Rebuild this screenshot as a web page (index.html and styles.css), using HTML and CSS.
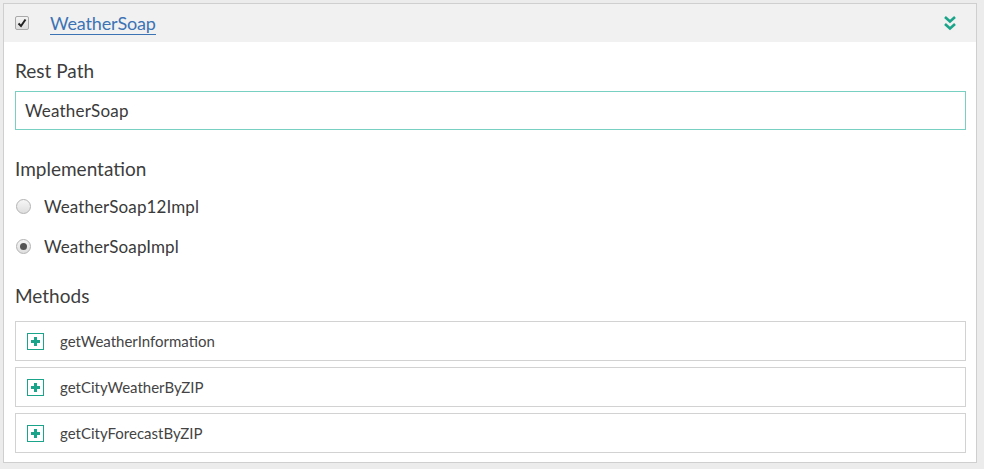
FILE: index.html
```html
<!DOCTYPE html>
<html>
<head>
<meta charset="utf-8">
<link rel="stylesheet" href="styles.css">
</head>
<body>
<div class="panel">
  <div class="panel-head">
    <span class="check"><svg width="10" height="10" viewBox="0 0 10 10"><path d="M1.5 5.5 L4 8 L8.5 1.5" fill="none" stroke="#222" stroke-width="2"/></svg></span>
    <a class="title">WeatherSoap</a>
    <svg class="chev" width="14" height="16" viewBox="0 0 14 16"><path d="M2 2 L7 6.5 L12 2 M2 9 L7 13.5 L12 9" fill="none" stroke="#1aa58a" stroke-width="2.6"/></svg>
  </div>
  <div class="panel-body">
    <div class="label">Rest Path</div>
    <div class="input">WeatherSoap</div>
    <div class="label impl">Implementation</div>
    <div class="radio-row"><span class="radio"></span><span>WeatherSoap12Impl</span></div>
    <div class="radio-row"><span class="radio on"></span><span>WeatherSoapImpl</span></div>
    <div class="label methods">Methods</div>
    <div class="method"><span class="plus"></span><span>getWeatherInformation</span></div>
    <div class="method"><span class="plus"></span><span>getCityWeatherByZIP</span></div>
    <div class="method"><span class="plus"></span><span>getCityForecastByZIP</span></div>
  </div>
</div>
</body>
</html>
```
FILE: styles.css
```css
html, body { margin: 0; padding: 0; }
body {
  background: #ececec;
  font-family: Lato, "Open Sans", sans-serif;
  color: #333;
  width: 984px;
  height: 469px;
  overflow: hidden;
}
.panel {
  margin: 3px 0 0 3px;
  width: 974px;
  height: 460px;
  border: 1px solid #cfcfcf;
  background: #fff;
  box-sizing: border-box;
}
.panel-head {
  height: 38px;
  background: #f1f1f1;
  display: flex;
  align-items: center;
  padding-left: 11px;
  padding-right: 19px;
}
.check {
  width: 12px; height: 12px;
  border: 1px solid #a9a9a9;
  border-radius: 2px;
  background: linear-gradient(#f4f4f4, #dcdcdc);
  display: flex; align-items: center; justify-content: center;
}
.title {
  margin-left: 21px;
  font-size: 18px;
  letter-spacing: -0.15px;
  color: #3c73b5;
  border-bottom: 1px solid #3c73b5;
  line-height: 21px;
  padding-top: 1px;
}
.chev { margin-left: auto; }
.panel-body { padding: 17px 10px 0 11px; }
.label { font-size: 19px; line-height: 24px; color: #3d3d3d; }
.input {
  margin-top: 8px;
  height: 39px;
  border: 1px solid #78d0c2;
  box-sizing: border-box;
  padding-left: 9px;
  font-size: 17px;
  letter-spacing: 0.2px;
  line-height: 37px;
  color: #3a3a3a;
}
.impl { margin-top: 27px; }
.radio-row {
  display: flex; align-items: center;
  font-size: 17px; color: #3a3a3a;
  height: 24px;
  letter-spacing: 0.1px;
}
.impl + .radio-row { margin-top: 13px; }
.radio-row + .radio-row { margin-top: 16px; }
.radio {
  width: 13px; height: 13px;
  border: 1px solid #b3b3b3;
  border-radius: 50%;
  background: linear-gradient(#f6f6f6, #dedede);
  margin-left: 1px;
  margin-right: 13px;
  position: relative;
}
.radio.on::after {
  content: "";
  position: absolute;
  left: 3px; top: 3px;
  width: 7px; height: 7px;
  border-radius: 50%;
  background: #555;
}
.methods { margin-top: 26px; }
.method {
  margin-top: 6px;
  height: 40px;
  border: 1px solid #d2d2d2;
  box-sizing: border-box;
  display: flex; align-items: center;
  font-size: 15px; color: #444;
}
.methods + .method { margin-top: 13px; }
.plus {
  border: 1px solid #1aa58a;
  margin-left: 11px; margin-right: 16px;
  position: relative;
  box-sizing: border-box;
  width: 17px; height: 17px;
}
.plus::before, .plus::after {
  content: ""; position: absolute; background: #1aa58a;
}
.plus::before { left: 3px; right: 3px; top: 6px; height: 3px; }
.plus::after { top: 3px; bottom: 3px; left: 6px; width: 3px; }
```
